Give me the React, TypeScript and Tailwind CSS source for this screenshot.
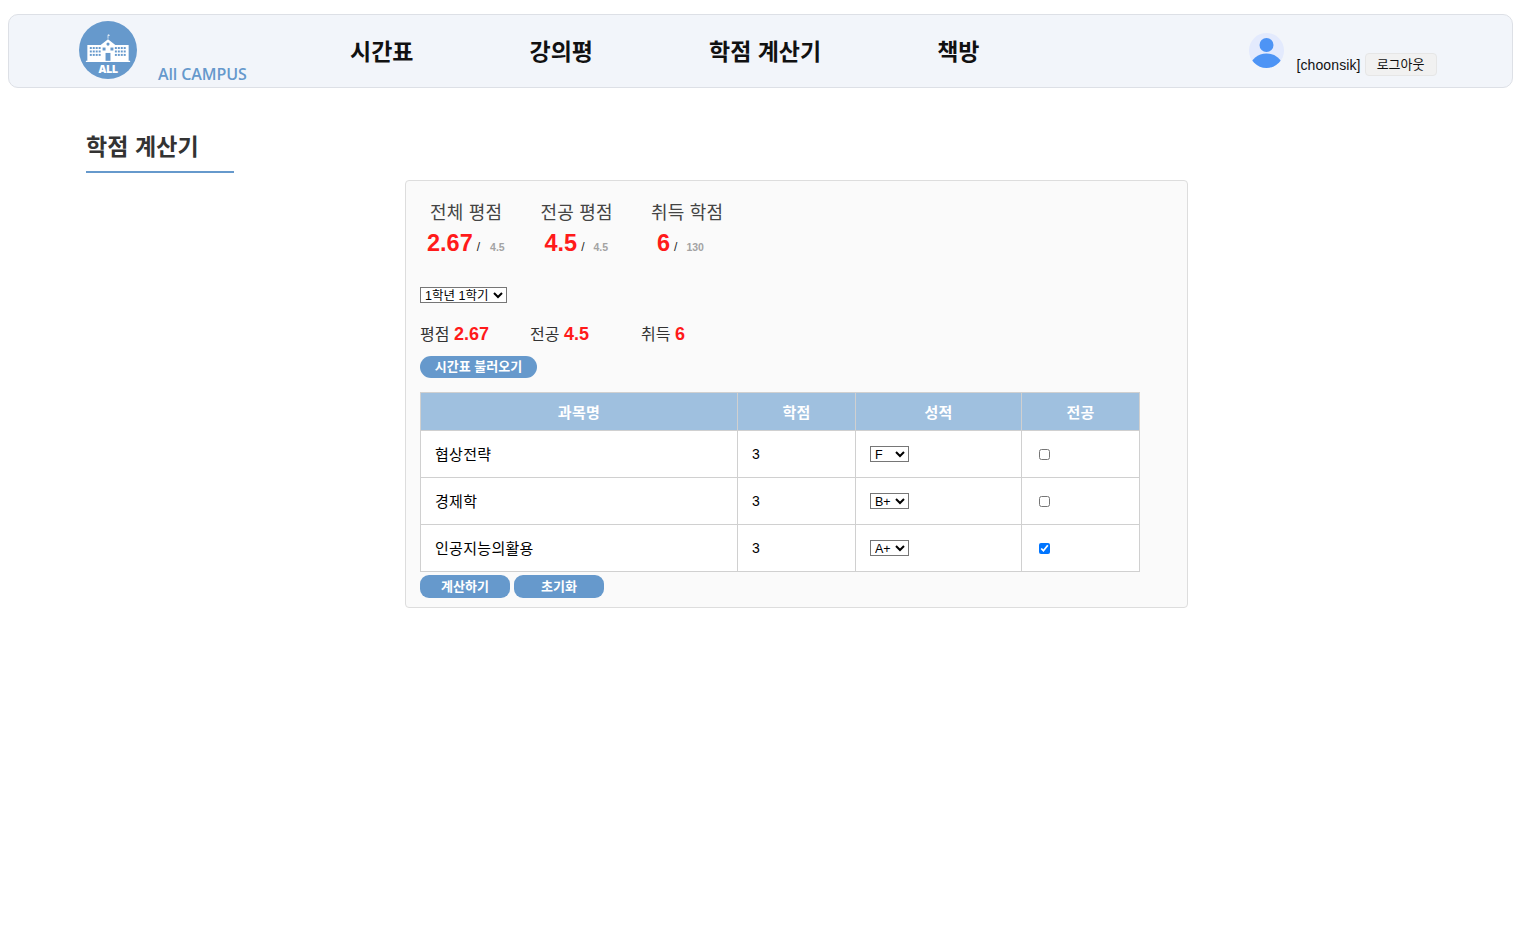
import React from 'react';

const FONT = "font-['Liberation_Sans','Noto_Sans_CJK_KR',sans-serif]";

const Logo: React.FC = () => (
  <svg width="58" height="58" viewBox="0 0 59 59" className="shrink-0">
    <circle cx="29.5" cy="29.5" r="29.5" fill="#6699cc" />
    <path d="M29.5 14v4" stroke="#fff" strokeWidth="0.7" />
    <path d="M29.7 13.6l2 .8-2 .8z" fill="#fff" />
    <path d="M7 40.5h45v1.2H7zM8.5 24.5h13.5l7.5-6 7.5 6h13.5v16h-42z" fill="#fff" />
    <circle cx="29.5" cy="23.5" r="1.6" fill="#6699cc" />
    <rect x="27" y="32.5" width="5" height="8" fill="#6699cc" />
    <g fill="#6699cc">
      {[11, 14, 17, 20, 36.5, 39.5, 42.5, 45.5].map((x) => (
        <React.Fragment key={x}>
          <rect x={x} y="26.5" width="2" height="2" />
          <rect x={x} y="30" width="2" height="2" />
          <rect x={x} y="33.5" width="2" height="2" />
        </React.Fragment>
      ))}
      <rect x="24" y="27" width="3" height="3" />
      <rect x="32" y="27" width="3" height="3" />
    </g>
    <text x="29.5" y="53" textAnchor="middle" fill="#fff" fontSize="11" fontWeight="800" fontFamily="'Open Sans',sans-serif" letterSpacing="-0.5">ALL</text>
  </svg>
);

const Avatar: React.FC = () => (
  <svg width="35" height="35" viewBox="0 0 35 35" className="shrink-0">
    <defs>
      <clipPath id="avatar-clip"><circle cx="17.5" cy="17.5" r="17.5" /></clipPath>
    </defs>
    <circle cx="17.5" cy="17.5" r="17.5" fill="#e3eafd" />
    <circle cx="17.5" cy="12" r="7" fill="#4d94f5" />
    <ellipse cx="17.5" cy="34" rx="16" ry="13.5" fill="#4d94f5" clipPath="url(#avatar-clip)" />
  </svg>
);

const Summary: React.FC<{ title: string; value: string; total: string; valueClass: string; totalClass: string }> = ({ title, value, total, valueClass, totalClass }) => (
  <div className="w-[110.5px] shrink-0">
    <div className="pl-[10px] text-[18px] tracking-[0.2px] leading-[24px] text-[#444] whitespace-nowrap">{title}</div>
    <div className="flex items-baseline mt-[5px] h-[26px]">
      <span className={`text-[23.5px] leading-[26px] font-bold text-[#ff1a1a] ${valueClass}`}>{value}</span>
      <span className="text-[12px] text-[#222] ml-[4px]">/</span>
      <span className={`text-[10.5px] font-semibold text-[#a3a3a3] ${totalClass}`}>{total}</span>
    </div>
  </div>
);

const Stat: React.FC<{ label: string; value: string; className: string }> = ({ label, value, className }) => (
  <div className={`text-[16px] leading-[20px] text-[#333] ${className}`}>
    {label} <span className="font-bold text-[#ff1a1a] text-[18px]">{value}</span>
  </div>
);

const rows = [
  { name: '협상전략', credit: '3', grade: 'F', major: false },
  { name: '경제학', credit: '3', grade: 'B+', major: false },
  { name: '인공지능의활용', credit: '3', grade: 'A+', major: true },
];

const grades = ['A+', 'A', 'B+', 'B', 'C+', 'C', 'D+', 'D', 'F'];

export default function App() {
  return (
    <div className={`${FONT} min-h-[940px] bg-white text-black`}>
      <div className="pt-[14px] px-[8px]">
        <header className="h-[74px] bg-[#f2f5fa] border border-[#dde0e6] rounded-[10px] flex items-start pl-[70px]">
          <div className="mt-[6px]"><Logo /></div>
          <div className="w-[21px]" />
          <div className="mt-[49px] text-[16px] tracking-[-0.1px] leading-[20px] font-semibold text-[#6699cc] font-['Open_Sans',sans-serif] w-[192px] whitespace-nowrap">All CAMPUS</div>
          <nav className="flex gap-[116px] mt-[23px] text-[23px] leading-[28px] font-bold text-[#111] whitespace-nowrap">
            <a>시간표</a>
            <a>강의평</a>
            <a>학점 계산기</a>
            <a>책방</a>
          </nav>
          <div className="ml-[269px] mt-[18px]"><Avatar /></div>
          <div className="ml-[13px] mt-[41px] text-[14px] tracking-[0.1px] leading-[18px] text-[#111]">[choonsik]</div>
          <button className="ml-[4px] mt-[38px] w-[72px] h-[23px] bg-[#f1f1f1] border border-[#e6e6e6] rounded-[4px] text-[13px] leading-[18px] text-[#111]">로그아웃</button>
        </header>
      </div>

      <div className="pl-[86px] pt-[44px]">
        <h2 className="w-[148px] h-[41px] border-b-2 border-[#6699cc] text-[23px] tracking-[0.1px] leading-[30px] font-bold text-[#333] whitespace-nowrap">학점 계산기</h2>
      </div>

      <div className="ml-[405px] mt-[7px] w-[783px] h-[428px] bg-[#fafafa] border border-[#dddddd] rounded-[4px] px-[14px] pt-[20px]">
        <div className="flex">
          <Summary title="전체 평점" value="2.67" total="4.5" valueClass="ml-[7px]" totalClass="ml-[10px]" />
          <Summary title="전공 평점" value="4.5" total="4.5" valueClass="ml-[14px]" totalClass="ml-[9px]" />
          <Summary title="취득 학점" value="6" total="130" valueClass="ml-[16px]" totalClass="ml-[9px]" />
        </div>
        <select defaultValue="1-1" className="block mt-[31px] w-[87px] h-[16px] border border-[#767676] bg-white text-[12.5px] leading-[14px] text-black">
          <option value="1-1">1학년 1학기</option>
          <option value="1-2">1학년 2학기</option>
        </select>
        <div className="flex mt-[21px]">
          <Stat label="평점" value="2.67" className="w-[110px]" />
          <Stat label="전공" value="4.5" className="w-[111px]" />
          <Stat label="취득" value="6" className="w-[110px]" />
        </div>
        <button className="block mt-[11px] w-[117px] h-[22px] rounded-[11px] bg-[#6699cc] text-white text-[13px] font-bold">시간표 불러오기</button>
        <table className="mt-[14px] w-[720px] table-fixed border-collapse text-[15px] tracking-[0.3px]">
          <colgroup>
            <col className="w-[317px]" />
            <col className="w-[118px]" />
            <col className="w-[166px]" />
            <col className="w-[118px]" />
          </colgroup>
          <thead>
            <tr className="h-[38px] bg-[#9fc0df] text-white">
              <th className="border border-[#d0d0d0] pt-[3px] font-bold">과목명</th>
              <th className="border border-[#d0d0d0] pt-[3px] font-bold">학점</th>
              <th className="border border-[#d0d0d0] pt-[3px] font-bold">성적</th>
              <th className="border border-[#d0d0d0] pt-[3px] font-bold">전공</th>
            </tr>
          </thead>
          <tbody>
            {rows.map((row) => (
              <tr key={row.name} className="h-[47px] bg-white">
                <td className="border border-[#d0d0d0] px-[14px] pt-[2px]">{row.name}</td>
                <td className="border border-[#d0d0d0] px-[14px] text-[14px] tracking-normal">{row.credit}</td>
                <td className="border border-[#d0d0d0] px-[14px]">
                  <select defaultValue={row.grade} className="block w-[39px] h-[16px] border border-[#767676] bg-white text-[12.5px] tracking-normal leading-[14px] text-black">
                    {grades.map((g) => <option key={g} value={g}>{g}</option>)}
                  </select>
                </td>
                <td className="border border-[#d0d0d0] px-[14px]">
                  <input type="checkbox" defaultChecked={row.major} className="block w-[11px] h-[11px] m-[3px]" />
                </td>
              </tr>
            ))}
          </tbody>
        </table>
        <div className="flex gap-[4px] mt-[3px]">
          <button className="w-[90px] h-[23px] rounded-[9px] bg-[#6699cc] text-white text-[13px] font-bold">계산하기</button>
          <button className="w-[90px] h-[23px] rounded-[9px] bg-[#6699cc] text-white text-[13px] font-bold">초기화</button>
        </div>
      </div>
    </div>
  );
}
